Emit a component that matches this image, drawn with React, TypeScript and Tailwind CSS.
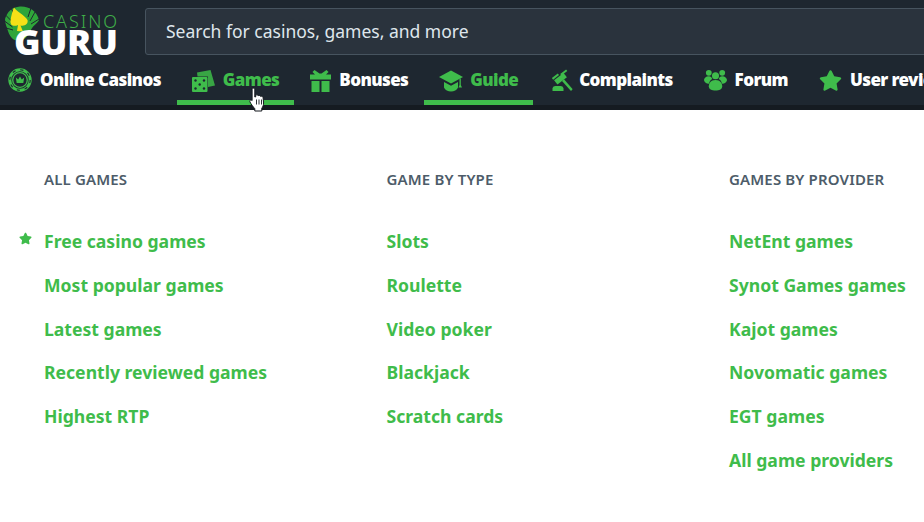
import React from "react";
import { FaStar } from "react-icons/fa";

const font = { fontFamily: '"Noto Sans", sans-serif' };
const G = "#3fbc4b";
const D = "#1e2730";

function Chip() {
  return (
    <svg viewBox="0 0 24 24" className="w-[24px] h-[24px] shrink-0" fill="none">
      <circle cx="12" cy="12" r="10.2" stroke={G} strokeWidth="3" />
      <circle cx="12" cy="12" r="10.2" stroke={D} strokeWidth="1.1" strokeDasharray="3.2 4.8" />
      <circle cx="12" cy="12" r="7.3" stroke={G} strokeWidth="1.3" />
      <path d="M7.800 9.500l2.400 1.900L12 8.500l1.800 2.900 2.400-1.900-.9 5.500H8.700z" fill={G} />
    </svg>
  );
}

function Dice() {
  return (
    <svg viewBox="0 0 23 23" className="w-[23px] h-[23px] shrink-0">
      <path d="M5 3.500L18.500 1 23 16.500l-7 1.500V7.500H5.500z" fill="#38a544" />
      <rect x="0" y="8" width="15.500" height="15" rx="1" fill={G} />
      <g fill={D}>
        <circle cx="3.500" cy="11.500" r="1.200" />
        <circle cx="12" cy="11.500" r="1.200" />
        <circle cx="7.700" cy="15.500" r="1.200" />
        <circle cx="3.500" cy="19.500" r="1.200" />
        <circle cx="12" cy="19.500" r="1.200" />
      </g>
    </svg>
  );
}

function Gift() {
  return (
    <svg viewBox="0 0 21 23" className="w-[21px] h-[23px] shrink-0">
      <path d="M4.500 1l5 3.500h2L16.500 1l2 2-2.500 2.500h5v5H0v-5h5L2.500 3z" fill={G} />
      <rect x="1.500" y="12" width="8" height="11" fill={G} />
      <rect x="11.500" y="12" width="8" height="11" fill={G} />
    </svg>
  );
}

function Cap() {
  return (
    <svg viewBox="0 0 24 23" className="w-[24px] h-[23px] shrink-0 -mr-[1px]">
      <path d="M12 1.500L24 8l-12 6.500L0 8z" fill={G} />
      <path d="M5 13l7 3.800 7-3.800v5.500c-1 2.500-4 4-7 4s-6-1.500-7-4z" fill={G} />
      <path d="M20.500 10l1.300-.7V16l1.200 2.500h-3.500l1-2.500z" fill={G} />
    </svg>
  );
}

function Gavel() {
  return (
    <svg viewBox="0 0 24 24" className="w-[24px] h-[24px] shrink-0 -mr-[2px]">
      <g fill={G}>
        <rect x="5.500" y="8" width="12" height="5.500" transform="rotate(-38 11.500 10.750)" />
        <rect x="2.700" y="7.500" width="7.500" height="2" transform="rotate(-38 6.500 8.500)" />
        <rect x="11" y="3.500" width="7.500" height="2" transform="rotate(-38 14.750 4.500)" />
        <path d="M13 13l2-1.800 8.300 9.600c.6.800-1 2.400-1.800 1.700z" />
        <path d="M3.500 20.500c.3-1.700 1.500-2.500 3-2.500h5c1.500 0 2.700.8 3 2.500V23h-11z" />
      </g>
    </svg>
  );
}

function Users() {
  return (
    <svg viewBox="0 0 24 22" className="w-[23px] h-[22px] shrink-0">
      <g fill={G}>
        <circle cx="5" cy="3.500" r="3" />
        <circle cx="19" cy="3.500" r="3" />
        <path d="M5 7c2 0 3 1 3.500 3-2 1.200-3 3-3.200 5C2 14.700 0 13 0 11c0-2 2-4 5-4z" />
        <path d="M19 7c2.900 0 5 2 5 4 0 2-2 3.700-5.300 4-.2-2-1.200-3.800-3.200-5 .5-2 1.500-3 3.500-3z" />
        <circle cx="12" cy="6.500" r="3.700" />
        <path d="M12 11c5 0 7 3.500 7 6.500 0 3-3 4.500-7 4.500s-7-1.500-7-4.500c0-3 2-6.500 7-6.500z" />
      </g>
    </svg>
  );
}

function Logo() {
  return (
    <div className="relative w-[145px] h-[60px] shrink-0">
      <svg viewBox="0 0 36 36" className="absolute left-[4px] top-[6px] w-[36px] h-[36px]">
        <path d="M1 13C3 6 8 1 16 .5 25 0 33 5 35 14c-2 4-7 6-9 12-2 4-6 8-10 9-7 0-10-4-12-10-1-4-3-7-3-12z" fill="#2fa53a" />
        <path d="M1.500 9l9 9M.5 15l8 6M2 22l7 2M27 2l-3 9M31 6l-5 9M35 13l-8 5M7 2l3 6" stroke={D} strokeWidth="1" />
        <path d="M10 1.500c2.500 4 11 8 13.500 12.500 1 3.500-2.500 6.500-7 5.500l2.500 6-6-.5 1-6C10 21 6 19.500 6.500 15 7 10 8.500 5 10 1.500z" fill="#f6e017" />
      </svg>
      <span className="absolute left-[43px] top-[14px] text-[#3fae49] text-[18px] leading-[14px] tracking-[1.9px] font-light">CASINO</span>
      <span className="absolute left-[14px] top-[29px] text-white text-[36px] leading-[26px] font-black tracking-[-0.5px]">GURU</span>
    </div>
  );
}

function HandCursor() {
  return (
    <svg viewBox="0 0 18 25" className="absolute left-[249px] top-[87px] w-[18px] h-[25px]">
      <path
        d="M4 1c1.100 0 1.800.8 1.800 1.800V10l.9-.1V8.200c1-.6 2.100-.4 2.500.5.900-.5 2-.3 2.400.7 1.100-.5 2.400 0 2.500 1.300l.5 5.300c0 2.500-.9 4-1.800 5.200V24H5.800v-2.300C4 19.700 2 17 .9 14.800c-.5-1.100.4-2.200 1.400-1.700l.8.5V2.800C3.100 1.700 3.500 1 4 1z"
        fill="#fff"
        stroke="#14191e"
        strokeWidth="1"
      />
      <path d="M7.500 12.500v5M10 12.500v5M12.500 12.500v5" stroke="#14191e" strokeWidth=".9" />
    </svg>
  );
}

type NavItem = { label: string; icon: React.ReactNode; active?: boolean; first?: boolean };

const navItems: NavItem[] = [
  { label: "Online Casinos", icon: <Chip />, first: true },
  { label: "Games", active: true, icon: <Dice /> },
  { label: "Bonuses", icon: <Gift /> },
  { label: "Guide", active: true, icon: <Cap /> },
  { label: "Complaints", icon: <Gavel /> },
  { label: "Forum", icon: <Users /> },
  { label: "User reviews", icon: <FaStar className="text-[#3fbc4b] shrink-0 w-[23px]" size={21} /> },
];

const columns = [
  {
    title: "ALL GAMES",
    links: ["Free casino games", "Most popular games", "Latest games", "Recently reviewed games", "Highest RTP"],
    star: true,
  },
  { title: "GAME BY TYPE", links: ["Slots", "Roulette", "Video poker", "Blackjack", "Scratch cards"] },
  {
    title: "GAMES BY PROVIDER",
    links: ["NetEnt games", "Synot Games games", "Kajot games", "Novomatic games", "EGT games", "All game providers"],
  },
];

export default function App() {
  return (
    <div className="relative w-[924px] h-[522px] overflow-hidden bg-white" style={font}>
      <header className="bg-[#1e2730] border-b-[5px] border-[#151b21]">
        <div className="flex h-[60px] items-start">
          <Logo />
          <div className="mt-[8px] w-[800px] shrink-0 h-[47px] rounded-l-[3px] bg-[#2a333d] border border-[#47545f] flex items-center pl-[20px] text-[17.5px] text-[#dfe6ec]">
            Search for casinos, games, and more
          </div>
        </div>
        <nav className="flex gap-[1px] h-[45px] whitespace-nowrap overflow-hidden">
          {navItems.map((n) => (
            <a
              key={n.label}
              className={`flex h-[45px] items-center gap-[8px] pr-[15px] pb-0 border-b-[5px] shrink-0 ${n.first ? "pl-[8px]" : "pl-[15px]"} ${
                n.active ? "border-[#3fbc4b] text-[#3fbc4b]" : "border-transparent text-white"
              } text-[17px] tracking-[-0.6px] font-black`}
            >
              {n.icon}
              <span>{n.label}</span>
            </a>
          ))}
        </nav>
      </header>
      <HandCursor />
      <main className="flex pl-[44px] pt-[59px]">
        {columns.map((c) => (
          <section key={c.title} className="w-[342.5px] shrink-0">
            <h3 className="text-[15px] leading-[20px] tracking-[0.15px] font-semibold text-[#4d5c69] whitespace-nowrap">{c.title}</h3>
            <ul className="mt-[40px] flex flex-col">
              {c.links.map((l, i) => (
                <li key={l} className="relative h-[43.8px] text-[17.6px] leading-[24px] font-bold text-[#3fbc4b] whitespace-nowrap">
                  {c.star && i === 0 && <FaStar className="absolute left-[-25px] top-[3px]" size={13} />}
                  {l}
                </li>
              ))}
            </ul>
          </section>
        ))}
      </main>
    </div>
  );
}
